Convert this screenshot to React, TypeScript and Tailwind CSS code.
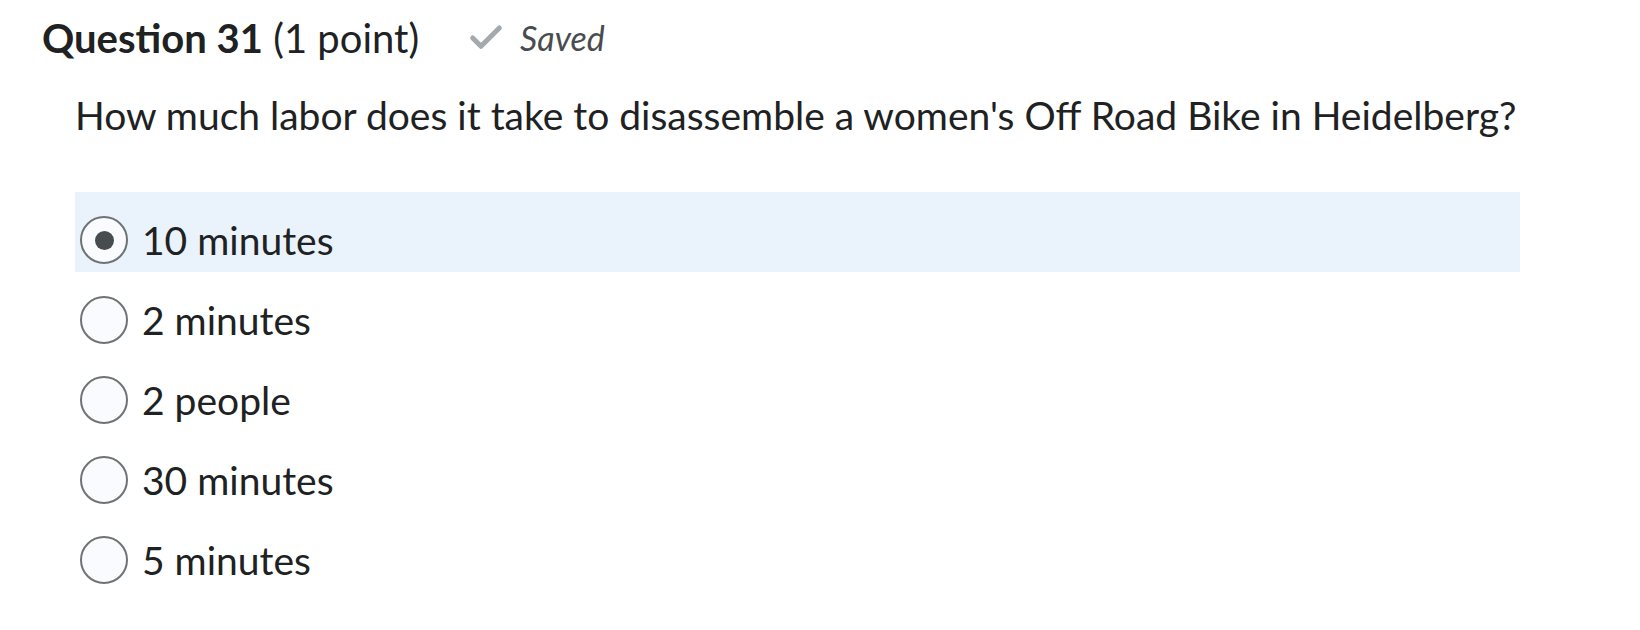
import { Check } from "lucide-react";

const options = ["10 minutes", "2 minutes", "2 people", "30 minutes", "5 minutes"];

function Radio({ checked }: { checked: boolean }) {
  return (
    <span className="flex h-[48px] w-[48px] shrink-0 items-center justify-center rounded-full border-2 border-[#6e7376] bg-[#f9fbff]">
      {checked && <span className="h-[19px] w-[19px] rounded-full bg-[#494c4e]" />}
    </span>
  );
}

export default function App() {
  const selected = 0;
  return (
    <div className="h-[630px] w-[1640px] bg-white text-[#202122]" style={{ fontFamily: "Lato, 'Noto Sans', sans-serif" }}>
      <div className="flex items-center pl-[42px] pt-[12px]">
        <h2 className="text-[40px] leading-[48px]">
          <span className="font-bold">Question 31</span> (1 point)
        </h2>
        <span className="ml-[47px] flex items-center gap-[14px] text-[#494c4e]">
          <Check size={40} strokeWidth={3} className="text-[#a3a9ad]" />
          <span className="text-[34px] italic">Saved</span>
        </span>
      </div>

      <p className="mt-[26px] pl-[75px] text-[39px] leading-[52px]">
        How much labor does it take to disassemble a women's Off Road Bike in Heidelberg?
      </p>

      <div className="mt-[51px] ml-[75px] w-[1445px]">
        {options.map((o, i) => (
          <label
            key={o}
            className={`flex h-[80px] items-center gap-[14px] pl-[5px] pt-[16px] ${i === selected ? "bg-[#eaf2fb]" : ""}`}
          >
            <Radio checked={i === selected} />
            <span className="text-[39px]">{o}</span>
          </label>
        ))}
      </div>
    </div>
  );
}
